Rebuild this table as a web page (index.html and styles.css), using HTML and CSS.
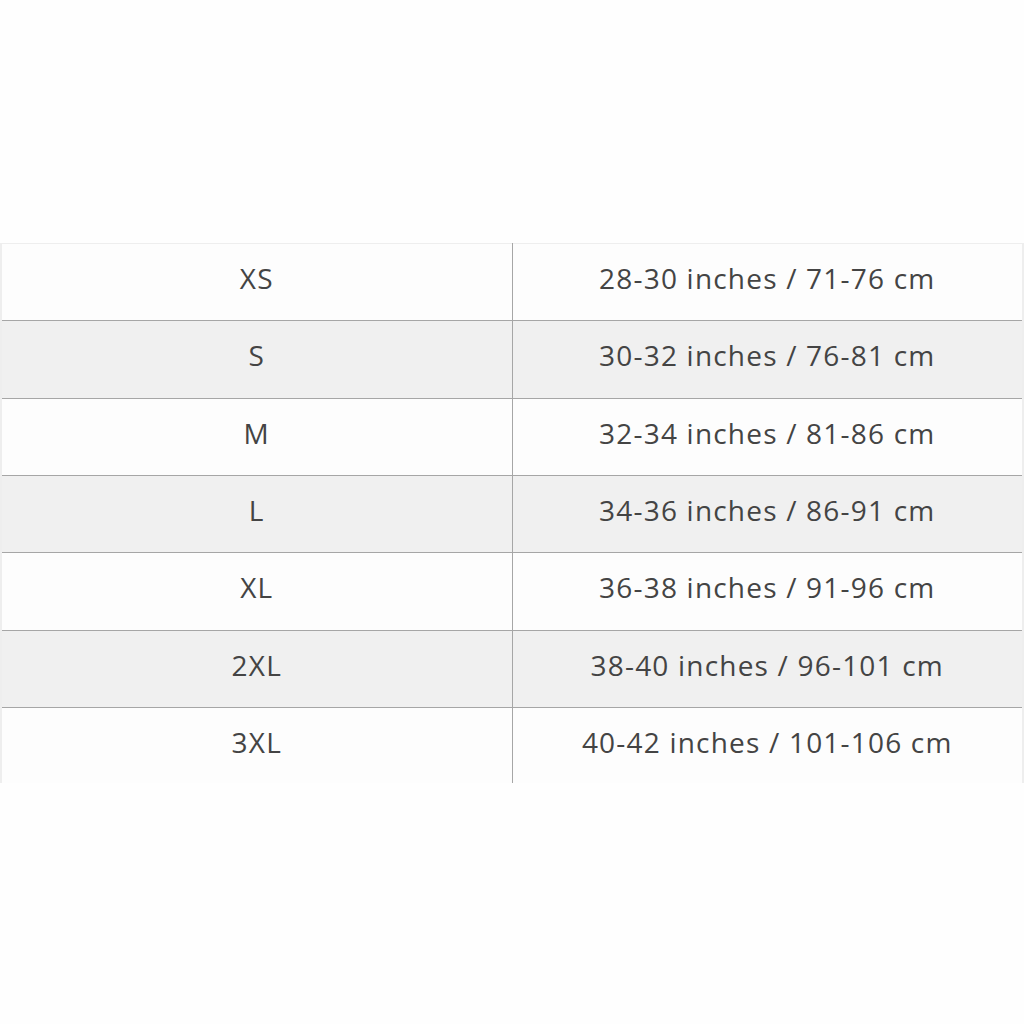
FILE: index.html
```html
<!DOCTYPE html>
<html>
<head>
<meta charset="utf-8">
<link rel="stylesheet" href="styles.css">
</head>
<body>
<div class="page">
<table class="sizes">
<tbody>
<tr class="odd"><td>XS</td><td>28-30 inches / 71-76 cm</td></tr>
<tr class="even"><td>S</td><td>30-32 inches / 76-81 cm</td></tr>
<tr class="odd"><td>M</td><td>32-34 inches / 81-86 cm</td></tr>
<tr class="even"><td>L</td><td>34-36 inches / 86-91 cm</td></tr>
<tr class="odd"><td>XL</td><td>36-38 inches / 91-96 cm</td></tr>
<tr class="even"><td>2XL</td><td>38-40 inches / 96-101 cm</td></tr>
<tr class="odd last"><td>3XL</td><td>40-42 inches / 101-106 cm</td></tr>
</tbody>
</table>
</div>
</body>
</html>
```
FILE: styles.css
```css
html, body {
  margin: 0;
  padding: 0;
  background: #fefefe;
}
.page {
  padding-top: 243px;
  width: 1024px;
}
.sizes {
  width: 1024px;
  border-collapse: collapse;
  table-layout: fixed;
  font-family: "Open Sans", sans-serif;
  font-size: 28px;
  letter-spacing: 1.2px;
  color: #444;
  border-top: 1px solid #eeeeee;
  border-left: 2px solid #eeeeee;
  border-right: 2px solid #eeeeee;
}
.sizes td {
  height: 77.33px;
  padding: 0 0 8px 0;
  box-sizing: border-box;
  text-align: center;
  vertical-align: middle;
  border-bottom: 1px solid #a6a6a6;
}
.sizes td:first-child {
  width: 511px;
  border-right: 1px solid #a6a6a6;
}
.sizes .last td {
  border-bottom: none;
  height: 76px;
}
.odd { background: #fdfdfd; }
.even { background: #f0f0f0; }
```
